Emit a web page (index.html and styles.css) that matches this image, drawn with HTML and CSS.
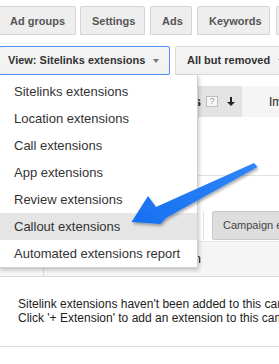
FILE: index.html
```html
<!DOCTYPE html>
<html>
<head>
<meta charset="utf-8">
<link rel="stylesheet" href="styles.css">
</head>
<body>
<div class="page">
  <div class="tabs">
    <div class="tab t1">Ad groups</div>
    <div class="tab t2">Settings</div>
    <div class="tab t3">Ads</div>
    <div class="tab t4">Keywords</div>
    <div class="tab t5">Auto targets</div>
  </div>

  <div class="toolbar">
    <div class="btn btn-view">View: Sitelinks extensions <span class="caret"></span></div>
    <div class="btn btn-filter">All but removed <span class="caret"></span></div>
  </div>

  <div class="table-head">
    <div class="th th-blank"></div>
    <div class="th th-sorted">
      <span class="th-label">Clicks</span>
      <span class="help">?</span>
      <svg class="sort" width="8" height="9" viewBox="0 0 8 9"><path d="M3 0h2v5h3l-4 4-4-4h3z" fill="#222"/></svg>
    </div>
    <div class="th th-next">Impr.</div>
  </div>

  <div class="spacer"></div>

  <div class="actions">
    <div class="act-hidden"></div>
    <div class="sep"></div>
    <div class="btn-camp">Campaign extensions</div>
  </div>

  <div class="row-head">
    <div class="rh-check"></div>
    <div class="rh-col">Extension</div>
  </div>

  <div class="empty">
    <p>Sitelink extensions haven't been added to this campaign.</p>
    <p>Click '+ Extension' to add an extension to this campaign.</p>
  </div>

  <ul class="menu">
    <li>Sitelinks extensions</li>
    <li>Location extensions</li>
    <li>Call extensions</li>
    <li>App extensions</li>
    <li>Review extensions</li>
    <li class="active">Callout extensions</li>
    <li>Automated extensions report</li>
  </ul>

  <svg class="arrow" width="279" height="364" viewBox="0 0 279 364">
    <defs>
      <filter id="sh" x="-20%" y="-20%" width="140%" height="150%">
        <feDropShadow dx="1" dy="2" stdDeviation="1.4" flood-color="#000" flood-opacity="0.35"/>
      </filter>
      <linearGradient id="ag" x1="1" y1="0" x2="0" y2="1">
        <stop offset="0" stop-color="#2f86f8"/>
        <stop offset="1" stop-color="#1670f0"/>
      </linearGradient>
    </defs>
    <polygon filter="url(#sh)" fill="url(#ag)" points="254,163 257.5,167 166,218 160.5,224 131.5,222 148,196 156,207"/>
  </svg>
</div>
</body>
</html>
```

FILE: styles.css
```css
html, body {
  margin: 0;
  padding: 0;
  background: #fff;
}
body {
  width: 279px;
  height: 364px;
  overflow: hidden;
  font-family: "Liberation Sans", Arial, sans-serif;
}
.page {
  position: relative;
  width: 279px;
  height: 364px;
  overflow: hidden;
}

/* Tabs */
.tabs {
  display: flex;
  padding-top: 6px;
  margin-left: -2px;
  white-space: nowrap;
}
.tab {
  box-sizing: border-box;
  height: 29px;
  line-height: 28px;
  padding: 0 11px;
  border: 1px solid #d5d5d5;
  border-radius: 2px 2px 0 0;
  background: #eeeeee;
  color: #555;
  font-weight: bold;
  font-size: 11px;
  flex: none;
}
.t1 { width: 78px; margin-right: 4px; }
.t2 { width: 65px; margin-right: 5px; }
.t3 { width: 42px; margin-right: 5px; }
.t4 { width: 73px; margin-right: 6px; }

/* Buttons */
.toolbar {
  display: flex;
  margin-top: 11px;
  margin-left: -1px;
  white-space: nowrap;
}
.btn {
  box-sizing: border-box;
  height: 29px;
  line-height: 27px;
  border: 1px solid #d9d9d9;
  border-radius: 2px;
  background: linear-gradient(#f5f5f5, #f0f0f0);
  color: #333;
  font-weight: bold;
  font-size: 11px;
  flex: none;
}
.btn-view {
  width: 171px;
  padding-left: 8px;
  border-color: #4d90fe;
}
.btn-filter {
  margin-left: 5px;
  padding-left: 11px;
  width: 120px;
}
.caret {
  display: inline-block;
  width: 0;
  height: 0;
  margin-left: 5px;
  vertical-align: middle;
  border-left: 3px solid transparent;
  border-right: 3px solid transparent;
  border-top: 4px solid #777;
}

/* Table head */
.table-head {
  display: flex;
  margin-top: 11px;
  height: 31px;
  white-space: nowrap;
}
.th {
  box-sizing: border-box;
  height: 31px;
  display: flex;
  align-items: center;
  font-size: 12px;
  color: #222;
  flex: none;
}
.th-blank { width: 140px; background: #f5f5f5; }
.th-sorted {
  width: 102px;
  background: #e3e3e3;
  justify-content: flex-end;
  padding-right: 7px;
  font-weight: bold;
}
.th-label { margin-right: 5px; }
.help {
  box-sizing: border-box;
  width: 12px;
  height: 11px;
  border: 1px solid #bdbdbd;
  background: #f7f7f7;
  color: #999;
  font-size: 9px;
  font-weight: normal;
  line-height: 9px;
  text-align: center;
  margin-right: 9px;
}
.sort { display: block; }
.th-next {
  flex: 1;
  background: #f5f5f5;
  padding-left: 27px;
}

.spacer {
  height: 58px;
  border-bottom: 1px solid #e3e3e3;
}

/* action row */
.actions {
  display: flex;
  align-items: stretch;
  padding-top: 35px;
  height: 29px;
  padding-bottom: 1px;
  white-space: nowrap;
}
.act-hidden { width: 203px; flex: none; }
.sep {
  width: 1px;
  background: #e2e2e2;
  flex: none;
}
.btn-camp {
  box-sizing: border-box;
  margin-left: 8px;
  height: 29px;
  line-height: 27px;
  padding-left: 10px;
  border: 1px solid #c8c8c8;
  border-radius: 2px;
  background: #dedede;
  color: #444;
  font-size: 11px;
  flex: none;
  width: 140px;
}

/* row head */
.row-head {
  display: flex;
  height: 34px;
  background: #f5f5f5;
  border-top: 1px solid #e6e6e6;
  border-bottom: 1px solid #dadada;
}
.rh-check {
  width: 43px;
  border-right: 1px solid #dadada;
  flex: none;
}
.rh-col {
  width: 157px;
  text-align: right;
  font-size: 13px;
  line-height: 34px;
  color: #222;
}

/* empty message */
.empty {
  padding: 20px 0 21px 18px;
  border-bottom: 1px solid #dcdcdc;
  white-space: nowrap;
}
.empty p {
  margin: 0;
  font-size: 12px;
  line-height: 14px;
  color: #222;
}

/* dropdown menu (overlay) */
.menu {
  position: absolute;
  left: -1px;
  top: 75px;
  box-sizing: border-box;
  width: 199px;
  margin: 0;
  padding: 3px 0 0;
  list-style: none;
  background: #fff;
  border: 1px solid rgba(0, 0, 0, 0.18);
  border-top: none;
  box-shadow: 1px 2px 4px rgba(0, 0, 0, 0.22);
}
.menu li {
  height: 27px;
  line-height: 27px;
  padding-left: 14px;
  font-size: 13px;
  color: #333;
  white-space: nowrap;
}
.menu li.active {
  background: #e5e5e5;
}

.arrow {
  position: absolute;
  left: 0;
  top: 0;
  pointer-events: none;
}
```
